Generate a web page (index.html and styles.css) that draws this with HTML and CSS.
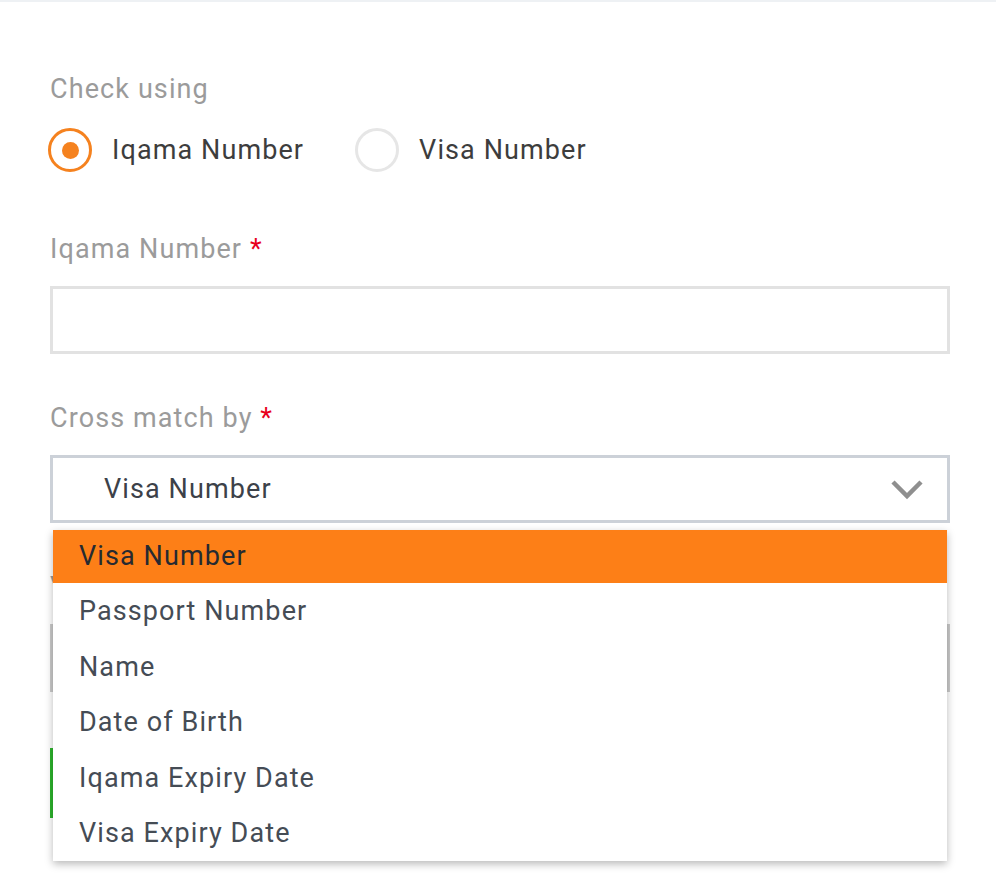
FILE: index.html
```html
<!DOCTYPE html>
<html lang="en">
<head>
    <meta charset="UTF-8">
    <meta name="viewport" content="width=device-width, initial-scale=1.0">
    <title>Check Status</title>
    <link rel="stylesheet" href="styles.css">
</head>
<body>
    <div class="page">
        <div class="form">
            <div class="group group-radio">
                <div class="label">Check using</div>
                <div class="radios">
                    <label class="radio checked"><span class="dot"></span>Iqama Number</label>
                    <label class="radio"><span class="dot"></span>Visa Number</label>
                </div>
            </div>

            <div class="group">
                <div class="label">Iqama Number <span class="req">*</span></div>
                <div class="input"></div>
            </div>

            <div class="group">
                <div class="label">Cross match by <span class="req">*</span></div>
                <div class="select-wrap">
                    <div class="select">
                        <span>Visa Number</span>
                        <svg class="chevron" width="32" height="22" viewBox="0 0 32 22">
                            <path d="M2 3 L16 17 L30 3" fill="none" stroke="#8f8f8f" stroke-width="4.5"/>
                        </svg>
                    </div>
                    <ul class="options">
                        <li class="active">Visa Number</li>
                        <li>Passport Number</li>
                        <li>Name</li>
                        <li>Date of Birth</li>
                        <li>Iqama Expiry Date</li>
                        <li>Visa Expiry Date</li>
                    </ul>
                </div>
            </div>

            <div class="group">
                <div class="label">Visa Number <span class="req">*</span></div>
                <div class="input input-grey"></div>
            </div>

            <div class="notice"></div>
        </div>
    </div>
</body>
</html>
```

FILE: styles.css
```css
body {
    margin: 0;
    font-family: Roboto, "Liberation Sans", sans-serif;
    letter-spacing: 1.1px;
    background: #fff;
}
.page {
    border-top: 2px solid #eef1f4;
    height: 891px;
    overflow: hidden;
}
.form {
    width: 900px;
    margin-left: 50px;
    padding-top: 71px;
}
.group {
    margin-bottom: 48px;
}
.group-radio {
    margin-bottom: 61px;
}
.label {
    font-size: 27px;
    line-height: 32px;
    color: #9b9b9b;
    margin-bottom: 21px;
}
.group-radio .label {
    margin-bottom: 23px;
}
.req {
    color: #e8001c;
}
.radios {
    display: flex;
}
.radio {
    display: flex;
    align-items: center;
    font-size: 27px;
    color: #3d3d3d;
    margin-right: 53px;
}
.dot {
    width: 44px;
    height: 44px;
    box-sizing: border-box;
    border: 3.5px solid #e6e6e6;
    border-radius: 50%;
    margin-left: -2px;
    margin-right: 20px;
    display: flex;
    align-items: center;
    justify-content: center;
}
.radio.checked .dot {
    border-color: #f5821f;
}
.radio.checked .dot::after {
    content: "";
    width: 17px;
    height: 17px;
    border-radius: 50%;
    background: #f5821f;
}
.input {
    height: 68px;
    box-sizing: border-box;
    border: 3px solid #e2e2e2;
}
.input-grey {
    border-color: #cbcbcb;
}
.select-wrap {
    position: relative;
}
.select {
    height: 68px;
    box-sizing: border-box;
    border: 3px solid #ccd1d8;
    display: flex;
    align-items: center;
    justify-content: space-between;
    padding: 0 24px 0 51px;
    font-size: 27px;
    color: #3c4149;
}
.chevron {
    display: block;
    margin-top: 2px;
}
.options {
    position: absolute;
    top: 75px;
    left: 3px;
    right: 3px;
    margin: 0;
    padding: 0;
    list-style: none;
    background: #fff;
    box-shadow: 0 3px 8px rgba(0, 0, 0, 0.28);
    z-index: 2;
}
.options li {
    height: 55.5px;
    line-height: 57px;
    padding-left: 26px;
    font-size: 27px;
    color: #454c55;
}
.options li.active {
    background: #fd7f17;
    color: #262a31;
    height: 53px;
    line-height: 52px;
}
.notice {
    height: 70px;
    border-left: 3px solid #2db52d;
    margin-top: 56px;
}
```
